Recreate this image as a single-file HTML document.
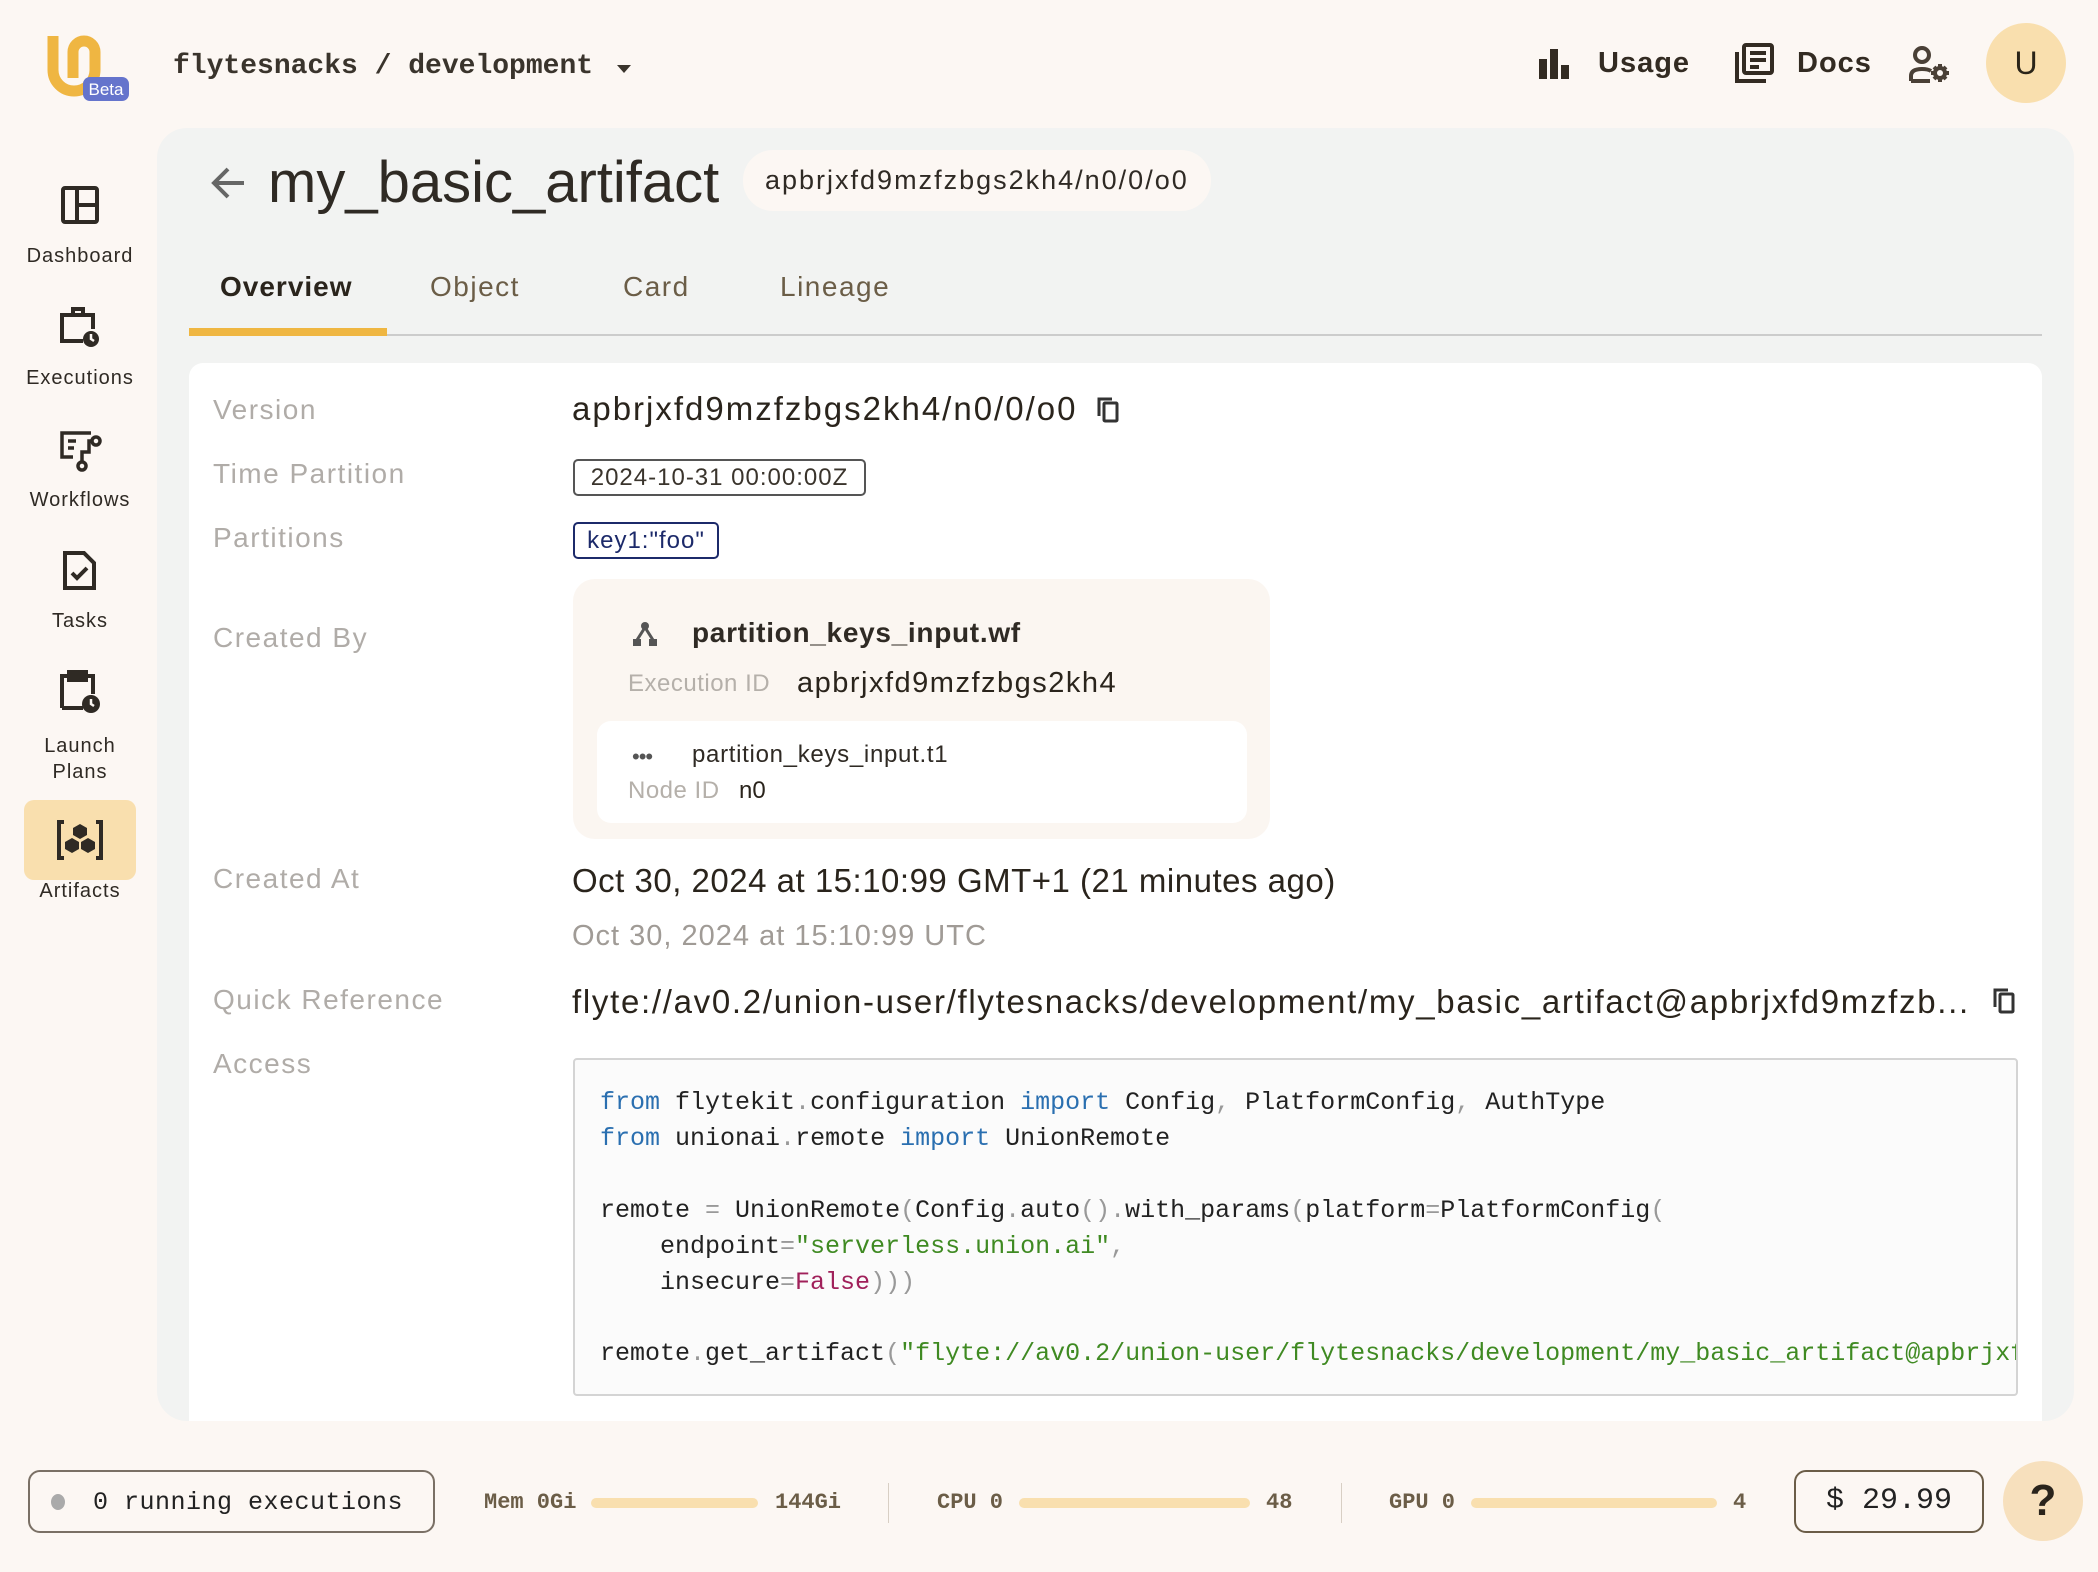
<!DOCTYPE html>
<html><head><meta charset="utf-8"><style>
*{margin:0;padding:0;box-sizing:border-box}
body{width:2098px;height:1572px;background:#fcf7f3;font-family:"Liberation Sans",sans-serif;color:#2f2a24;position:relative;overflow:hidden}
.a{position:absolute;white-space:nowrap}
.mono{font-family:"Liberation Mono",monospace}
.nav{position:absolute;left:0;width:160px;text-align:center;font-size:20px;letter-spacing:1px;color:#2f2a24}
.lbl{position:absolute;left:213px;font-size:28px;color:#b0aca8;letter-spacing:1.5px}
.code{font-family:"Liberation Mono",monospace;font-size:25px;color:#222;position:absolute;left:598px;white-space:pre}
.kw{color:#2a6fb0}.st{color:#3f8a22}.fl{color:#a0205a}.op{color:#999}
</style></head><body>
<!-- logo -->
<svg class="a" style="left:44px;top:30px" width="90" height="72" viewBox="0 0 90 72">
<path d="M9 6 V40 A21 21 0 0 0 51 40 V22 A11 11 0 0 0 29 22 V48" fill="none" stroke="#efb642" stroke-width="11"/>
<rect x="39" y="47" width="46" height="24" rx="7" fill="#6574cc"/>
<text x="62" y="65" font-size="17" fill="#fff" text-anchor="middle" font-family="Liberation Sans">Beta</text></svg>
<div class="a mono" style="left:173px;top:51px;font-size:28px;font-weight:bold;color:#3a342c">flytesnacks / development</div>
<div class="a" style="left:617px;top:65px;border:7px solid transparent;border-top:8px solid #3a342c"></div>
<!-- top right -->
<svg class="a" style="left:1537px;top:47px" width="34" height="34"><rect x="2" y="12" width="8" height="20" fill="#332b22"/><rect x="13" y="2" width="8" height="30" fill="#332b22"/><rect x="24" y="18" width="8" height="14" fill="#332b22"/></svg>
<div class="a" style="left:1598px;top:47px;font-size:29px;font-weight:bold;color:#332b22;letter-spacing:1px">Usage</div>
<svg class="a" style="left:1733px;top:42px" width="42" height="42" fill="none" stroke="#332b22" stroke-width="4"><rect x="11" y="3" width="28" height="28" rx="2"/><path d="M4 10 V39 H33"/><path d="M17 11H33M17 18H33M17 25H26"/></svg>
<div class="a" style="left:1797px;top:47px;font-size:29px;font-weight:bold;color:#332b22;letter-spacing:1px">Docs</div>
<svg class="a" style="left:1908px;top:45px" width="44" height="40" fill="none" stroke="#4a4036" stroke-width="4"><circle cx="14" cy="10" r="7"/><path d="M3 36 V31 Q3 24 14 24 Q20 24 23 26"/><path d="M3 36H22"/><circle cx="32" cy="28" r="5"/><path d="M32 19V22M32 34V37M23 28H26M38 28H41M26 22L28 24M36 32L38 34M26 34L28 32M36 24L38 22"/></svg>
<div class="a" style="left:1986px;top:23px;width:80px;height:80px;border-radius:50%;background:#f9dfae;font-size:32px;text-align:center;line-height:80px;color:#2a2418">U</div>
<!-- sidebar -->
<svg class="a" style="left:61px;top:186px" width="38" height="38" fill="none" stroke="#2f2a24" stroke-width="4"><rect x="2" y="2" width="34" height="34" rx="2"/><path d="M16 2V36M16 19H36"/></svg>
<div class="nav" style="top:245px">Dashboard</div>
<svg class="a" style="left:59px;top:305px" width="44" height="44" fill="none" stroke="#2f2a24" stroke-width="4"><path d="M14 10V4H24V10"/><path d="M24 36H3V10H34V24"/><circle cx="32" cy="34" r="8" fill="#2f2a24" stroke="none"/><path d="M32 29V34L35 36" stroke="#fcf7f3" stroke-width="2.5"/></svg>
<div class="nav" style="top:367px">Executions</div>
<svg class="a" style="left:59px;top:430px" width="44" height="42" fill="none" stroke="#2f2a24" stroke-width="3.5"><path d="M32 3H3V27H14"/><path d="M9 11H17M9 18H15"/><circle cx="37" cy="11" r="4"/><circle cx="23" cy="36" r="4"/><path d="M33 11H30V22H23V32"/></svg>
<div class="nav" style="top:489px">Workflows</div>
<svg class="a" style="left:62px;top:550px" width="36" height="42" fill="none" stroke="#2f2a24" stroke-width="4"><path d="M3 3H22L32 13V38H3Z"/><path d="M10 23L15 28L25 18"/></svg>
<div class="nav" style="top:610px">Tasks</div>
<svg class="a" style="left:59px;top:668px" width="44" height="46" fill="none" stroke="#2f2a24" stroke-width="4"><path d="M3 40V8H34V26M24 40H3"/><rect x="10" y="4" width="17" height="8" fill="#2f2a24"/><circle cx="32" cy="36" r="9" fill="#2f2a24" stroke="none"/><path d="M32 31V36L35 38" stroke="#fcf7f3" stroke-width="2.5"/></svg>
<div class="nav" style="top:733px;line-height:26px">Launch<br>Plans</div>
<div class="a" style="left:24px;top:800px;width:112px;height:80px;border-radius:10px;background:#f9dfae"></div>
<svg class="a" style="left:54px;top:816px" width="52" height="48" fill="#2f2a24"><path d="M10 4H3V44H10V40H7V8H10Z"/><path d="M42 4H49V44H42V40H45V8H42Z"/><path d="M26 8L33 12V19L26 23L19 19V12Z"/><path d="M18 22L25 26V33L18 37L11 33V26Z"/><path d="M34 22L41 26V33L34 37L27 33V26Z"/></svg>
<div class="nav" style="top:880px">Artifacts</div>
<!-- main panel -->
<div class="a" style="left:157px;top:128px;width:1917px;height:1293px;background:#f2f3f2;border-radius:30px;overflow:hidden">
<div class="a" style="left:32px;top:235px;width:1853px;height:1100px;background:#fff;border-radius:14px"></div>
</div>
<svg class="a" style="left:210px;top:166px" width="36" height="34" fill="none" stroke="#666" stroke-width="4"><path d="M34 17H4M18 3L4 17L18 31"/></svg>
<div class="a" style="left:268px;top:149px;font-size:58px;color:#2f2a24">my_basic_artifact</div>
<div class="a" style="left:743px;top:150px;width:468px;height:61px;border-radius:30px;background:#fcf7f3;font-size:27px;line-height:61px;padding-left:22px;color:#2f2a24;letter-spacing:2px">apbrjxfd9mzfzbgs2kh4/n0/0/o0</div>
<div class="a" style="left:220px;top:271px;font-size:28px;font-weight:bold;color:#2a241c;letter-spacing:1px">Overview</div>
<div class="a" style="left:430px;top:271px;font-size:28px;color:#6b5d47;letter-spacing:1.5px">Object</div>
<div class="a" style="left:623px;top:271px;font-size:28px;color:#6b5d47;letter-spacing:1.5px">Card</div>
<div class="a" style="left:780px;top:271px;font-size:28px;color:#6b5d47;letter-spacing:1.5px">Lineage</div>
<div class="a" style="left:189px;top:334px;width:1853px;height:2px;background:#ccc"></div>
<div class="a" style="left:189px;top:328px;width:198px;height:8px;background:#efb642"></div>
<div class="lbl" style="top:394px">Version</div>
<div class="lbl" style="top:458px">Time Partition</div>
<div class="lbl" style="top:522px">Partitions</div>
<div class="lbl" style="top:622px">Created By</div>
<div class="lbl" style="top:863px">Created At</div>
<div class="lbl" style="top:984px">Quick Reference</div>
<div class="lbl" style="top:1048px">Access</div>
<div class="a" style="left:572px;top:390px;font-size:33px;color:#2a241c;letter-spacing:2px">apbrjxfd9mzfzbgs2kh4/n0/0/o0</div>
<svg class="a" style="left:1096px;top:396px" width="24" height="28" fill="none" stroke="#333" stroke-width="3"><rect x="8" y="7" width="13" height="18" rx="1"/><path d="M3 20V3H16"/></svg>
<div class="a" style="left:573px;top:459px;width:293px;height:37px;border:2px solid #555;border-radius:5px;font-size:24px;line-height:33px;text-align:center;color:#3a342c;letter-spacing:1px">2024-10-31 00:00:00Z</div>
<div class="a" style="left:573px;top:522px;width:146px;height:37px;border:2px solid #1c2a6a;border-radius:5px;font-size:24px;line-height:33px;text-align:center;color:#1c2a6a;letter-spacing:1px">key1:"foo"</div>
<div class="a" style="left:573px;top:579px;width:697px;height:260px;background:#fbf6f1;border-radius:22px"></div>
<svg class="a" style="left:632px;top:621px" width="26" height="26" fill="#555"><circle cx="13" cy="5" r="4"/><path d="M12 8L5 19M14 8L21 19" stroke="#555" stroke-width="3"/><rect x="1" y="18" width="8" height="7"/><rect x="17" y="18" width="8" height="7"/></svg>
<div class="a" style="left:692px;top:617px;font-size:28px;font-weight:bold;color:#2f2a24;letter-spacing:.7px">partition_keys_input.wf</div>
<div class="a" style="left:628px;top:670px;font-size:24px;color:#b5b0aa;letter-spacing:.5px">Execution ID</div>
<div class="a" style="left:797px;top:667px;font-size:29px;color:#2a241c;letter-spacing:1.5px">apbrjxfd9mzfzbgs2kh4</div>
<div class="a" style="left:597px;top:721px;width:650px;height:102px;background:#fff;border-radius:14px"></div>
<div class="a" style="left:632px;top:744px;font-size:22px;color:#555;letter-spacing:-1px">•••</div>
<div class="a" style="left:692px;top:741px;font-size:24px;color:#2f2a24;letter-spacing:.7px">partition_keys_input.t1</div>
<div class="a" style="left:628px;top:777px;font-size:24px;color:#b5b0aa;letter-spacing:.5px">Node ID</div>
<div class="a" style="left:739px;top:777px;font-size:24px;color:#2a241c">n0</div>
<div class="a" style="left:572px;top:862px;font-size:33px;color:#2a241c;letter-spacing:.5px">Oct 30, 2024 at 15:10:99 GMT+1 (21 minutes ago)</div>
<div class="a" style="left:572px;top:920px;font-size:29px;color:#a09b96;letter-spacing:1px">Oct 30, 2024 at 15:10:99 UTC</div>
<div class="a" style="left:572px;top:983px;font-size:33px;color:#2a241c;letter-spacing:1.7px">flyte://av0.2/union-user/flytesnacks/development/my_basic_artifact@apbrjxfd9mzfzb...</div>
<svg class="a" style="left:1992px;top:987px" width="24" height="28" fill="none" stroke="#333" stroke-width="3"><rect x="8" y="7" width="13" height="18" rx="1"/><path d="M3 20V3H16"/></svg>
<div class="a" style="left:573px;top:1058px;width:1445px;height:338px;background:#fbfbfb;border:2px solid #d4d4d4;border-radius:4px;overflow:hidden">
<div class="code" style="left:25px;top:28px"><span class="kw">from</span> flytekit<span class="op">.</span>configuration <span class="kw">import</span> Config<span class="op">,</span> PlatformConfig<span class="op">,</span> AuthType</div>
<div class="code" style="left:25px;top:64px"><span class="kw">from</span> unionai<span class="op">.</span>remote <span class="kw">import</span> UnionRemote</div>
<div class="code" style="left:25px;top:136px">remote <span class="op">=</span> UnionRemote<span class="op">(</span>Config<span class="op">.</span>auto<span class="op">()</span><span class="op">.</span>with_params<span class="op">(</span>platform<span class="op">=</span>PlatformConfig<span class="op">(</span></div>
<div class="code" style="left:25px;top:172px">    endpoint<span class="op">=</span><span class="st">"serverless.union.ai"</span><span class="op">,</span></div>
<div class="code" style="left:25px;top:208px">    insecure<span class="op">=</span><span class="fl">False</span><span class="op">)))</span></div>
<div class="code" style="left:25px;top:279px">remote<span class="op">.</span>get_artifact<span class="op">(</span><span class="st">"flyte://av0.2/union-user/flytesnacks/development/my_basic_artifact@apbrjxfd9mzfzbgs2kh4"</span></div>
</div>
<!-- bottom bar -->
<div class="a" style="left:28px;top:1470px;width:407px;height:63px;border:2px solid #7a7065;border-radius:12px"></div>
<div class="a" style="left:51px;top:1494px;width:14px;height:16px;border-radius:50%;background:#aaa"></div>
<div class="a mono" style="left:93px;top:1488px;font-size:25px;color:#222;letter-spacing:.5px">0 running executions</div>
<div class="a mono" style="left:484px;top:1490px;font-size:22px;font-weight:bold;color:#6b5d47">Mem 0Gi</div>
<div class="a" style="left:591px;top:1498px;width:167px;height:10px;border-radius:5px;background:#f9dfae"></div>
<div class="a mono" style="left:775px;top:1490px;font-size:22px;font-weight:bold;color:#6b5d47">144Gi</div>
<div class="a" style="left:888px;top:1483px;width:1px;height:40px;background:#d8cfc4"></div>
<div class="a mono" style="left:937px;top:1490px;font-size:22px;font-weight:bold;color:#6b5d47">CPU 0</div>
<div class="a" style="left:1019px;top:1498px;width:231px;height:10px;border-radius:5px;background:#f9dfae"></div>
<div class="a mono" style="left:1266px;top:1490px;font-size:22px;font-weight:bold;color:#6b5d47">48</div>
<div class="a" style="left:1341px;top:1483px;width:1px;height:40px;background:#d8cfc4"></div>
<div class="a mono" style="left:1389px;top:1490px;font-size:22px;font-weight:bold;color:#6b5d47">GPU 0</div>
<div class="a" style="left:1471px;top:1498px;width:246px;height:10px;border-radius:5px;background:#f9dfae"></div>
<div class="a mono" style="left:1733px;top:1490px;font-size:22px;font-weight:bold;color:#6b5d47">4</div>
<div class="a" style="left:1794px;top:1470px;width:190px;height:63px;border:2px solid #6b5d47;border-radius:12px;font-family:'Liberation Mono',monospace;font-size:30px;line-height:59px;text-align:center;color:#222">$ 29.99</div>
<div class="a" style="left:2003px;top:1461px;width:80px;height:80px;border-radius:50%;background:#f7e0bd;font-size:44px;font-weight:bold;text-align:center;line-height:80px;color:#2a241c">?</div>
</body></html>
